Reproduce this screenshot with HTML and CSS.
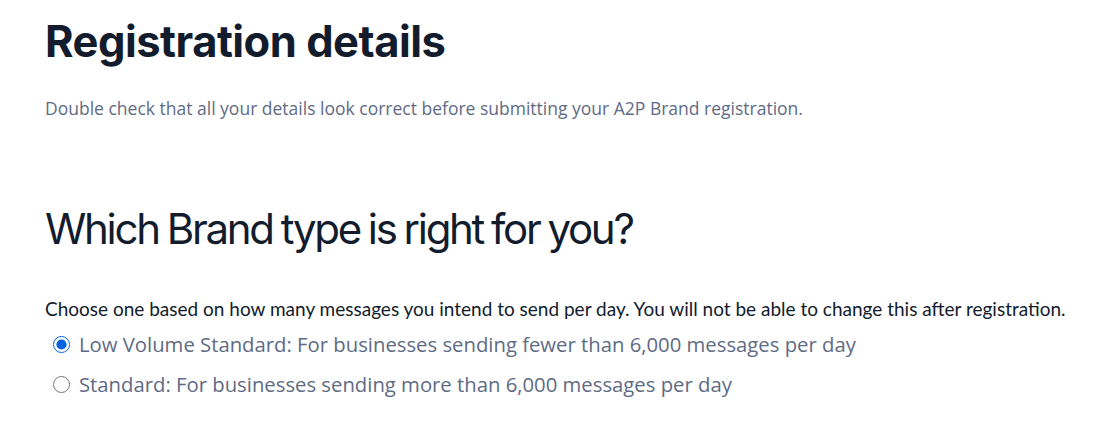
FILE: index.html
```html
<!DOCTYPE html>
<html lang="en">
<head>
<meta charset="utf-8">
<title>Registration details</title>
<link rel="stylesheet" href="styles.css">
</head>
<body>
<main class="page">
  <h1 class="title">Registration details</h1>
  <p class="subtitle">Double check that all your details look correct before submitting your A2P Brand registration.</p>
  <h2 class="section-title">Which Brand type is right for you?</h2>
  <p class="prompt">Choose one based on how many messages you intend to send per day. You will not be able to change this after registration.</p>
  <div class="options">
    <label class="option">
      <input type="radio" name="brand" class="radio" checked>
      <span>Low Volume Standard: For businesses sending fewer than 6,000 messages per day</span>
    </label>
    <label class="option">
      <input type="radio" name="brand" class="radio">
      <span>Standard: For businesses sending more than 6,000 messages per day</span>
    </label>
  </div>
</main>
</body>
</html>
```

FILE: styles.css
```css
html, body {
  margin: 0;
  padding: 0;
  background: #ffffff;
}

.page {
  padding: 14px 0 0 45px;
  font-family: "Open Sans", sans-serif;
}

.title {
  margin: 0;
  font-family: Inter, sans-serif;
  font-weight: 700;
  font-size: 43.5px;
  line-height: 54px;
  letter-spacing: -0.5px;
  color: #121c2d;
}

.subtitle {
  margin: 28px 0 0;
  font-family: "Open Sans", sans-serif;
  font-size: 17.5px;
  line-height: 24px;
  color: #606b85;
}

.section-title {
  margin: 82px 0 0;
  font-family: Inter, sans-serif;
  font-weight: 400;
  font-size: 42px;
  line-height: 54px;
  letter-spacing: -2.3px;
  word-spacing: -1.5px;
  color: #121c2d;
}

.prompt {
  margin: 40px 0 0;
  font-family: Lato, sans-serif;
  font-size: 19px;
  line-height: 26px;
  color: #121c2d;
}

.options {
  display: flex;
  flex-direction: column;
  gap: 14px;
  margin-top: 9px;
  padding-left: 9px;
}

.option {
  display: flex;
  align-items: center;
  gap: 9px;
  font-family: "Open Sans", sans-serif;
  font-size: 20.3px;
  line-height: 26px;
  color: #606b85;
}

.radio {
  margin: 0 0 0 -1px;
  width: 17px;
  height: 17px;
  accent-color: #0263e0;
}
```
